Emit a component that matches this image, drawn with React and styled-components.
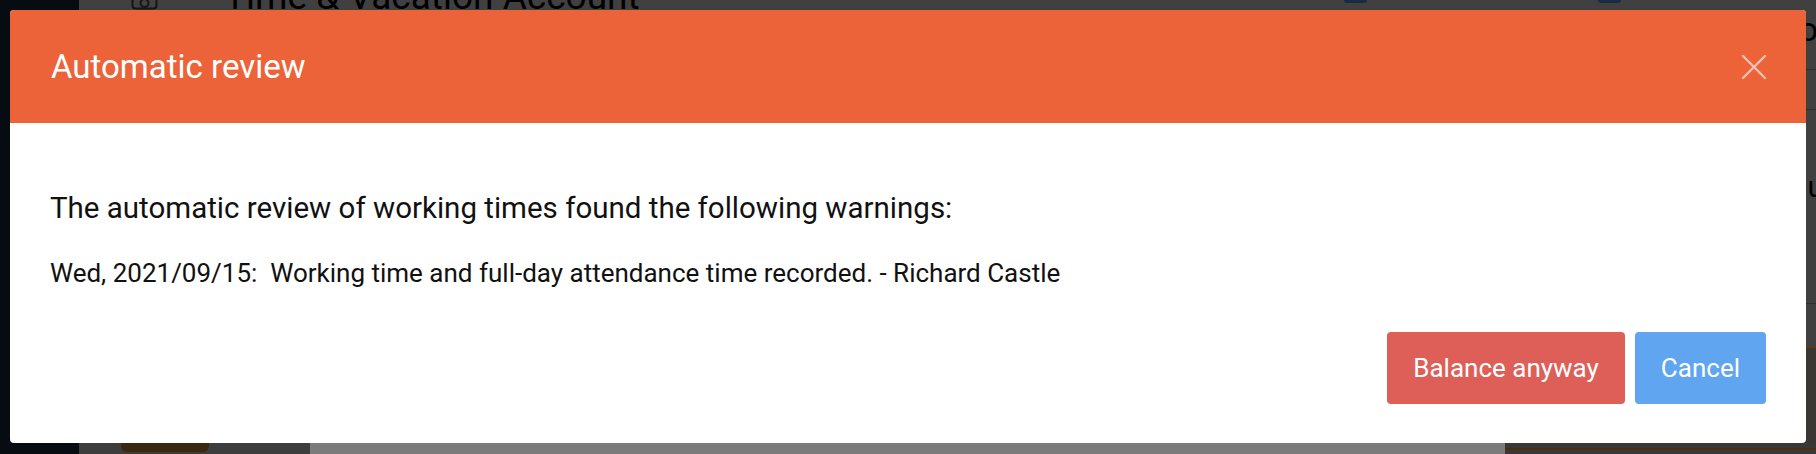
import React from 'react'
import styled, { createGlobalStyle } from 'styled-components';

const GlobalStyle = createGlobalStyle`
html, body {
    margin:0;
    padding:0;
    background:#404040;
}
body {
    font-family: Roboto, "Liberation Sans", Arial, sans-serif;
}
`

const App = () => {
    return (
        <>
            <GlobalStyle />
            <Page>
                <Sidebar />
                <Main>
                    <TopBar>
                        <PageIcon viewBox='0 0 27 27'>
                            <rect x='1.5' y='1.5' width='24' height='24' rx='3' fill='none' stroke='#151515' strokeWidth='2' />
                            <circle cx='13.5' cy='20' r='4' fill='none' stroke='#151515' strokeWidth='2' />
                        </PageIcon>
                        <PageTitle>Time &amp; Vacation Account</PageTitle>
                        <NavyBox $first />
                        <NavyBox />
                        <EdgeText>Action</EdgeText>
                    </TopBar>
                    <Row $height={40} />
                    <Row $height={194}>
                        <EdgeText $small>Menu</EdgeText>
                    </Row>
                    <Row $height={43} $line='#5a3a1c' />
                    <Filler />
                    <BottomBar>
                        <BottomLeft>
                            <Pill />
                        </BottomLeft>
                        <BottomMid />
                        <BottomRight />
                    </BottomBar>
                </Main>

                <Modal role='dialog'>
                    <ModalHeader>
                        <ModalTitle>Automatic review</ModalTitle>
                        <CloseButton aria-label='close'>
                            <svg width='26' height='26' viewBox='0 0 26 26'>
                                <path d='M2 2 L24 24 M24 2 L2 24' stroke='rgba(255,255,255,0.6)' strokeWidth='2.4' strokeLinecap='round' />
                            </svg>
                        </CloseButton>
                    </ModalHeader>
                    <ModalBody>
                        <Intro>The automatic review of working times found the following warnings:</Intro>
                        <Warning>Wed, 2021/09/15:{'\u00a0'} Working time and full-day attendance time recorded. - Richard Castle</Warning>
                        <ButtonRow>
                            <ActionButton $bg='#de5f58'>Balance anyway</ActionButton>
                            <ActionButton $bg='#60a5ef'>Cancel</ActionButton>
                        </ButtonRow>
                    </ModalBody>
                </Modal>
            </Page>
        </>
    )
}

const Page = styled.div`
position:relative;
display:flex;
width:1816px;
height:454px;
overflow:hidden;
background:#404040;
`

const Sidebar = styled.div`
width:79px;
flex-shrink:0;
background:#070b12;
`

const Main = styled.div`
flex:1;
display:flex;
flex-direction:column;
min-width:0;
`

const TopBar = styled.div`
display:flex;
align-items:flex-start;
height:99px;
margin-top:-30px;
padding-left:52px;
border-bottom:1px solid #2e2e2e;
flex-shrink:0;
`

const PageIcon = styled.svg`
width:27px;
height:27px;
margin-top:13px;
flex-shrink:0;
`

const PageTitle = styled.h1`
margin:8px 0 0 66px;
font-size:37px;
line-height:37px;
font-weight:400;
color:#000;
white-space:nowrap;
`

const NavyBox = styled.div`
width:23px;
height:23px;
margin-top:10px;
margin-left:${p => p.$first ? 'auto' : '231px'};
border-radius:3px;
background:#1a2a42;
flex-shrink:0;
`

const EdgeText = styled.span`
margin-left:${p => p.$small ? 'auto' : '118px'};
margin-right:${p => p.$small ? '-8px' : '-21px'};
margin-top:${p => p.$small ? '62px' : '42px'};
font-size:${p => p.$small ? '30px' : '34px'};
line-height:1;
color:#000;
white-space:nowrap;
flex-shrink:0;
`

const Row = styled.div`
display:flex;
align-items:flex-start;
height:${p => p.$height - 1}px;
border-bottom:${p => p.$line ? '2px' : '1px'} solid ${p => p.$line || '#2e2e2e'};
flex-shrink:0;
`

const Filler = styled.div`
flex:1;
background:#3a3733;
`

const BottomBar = styled.div`
display:flex;
height:11px;
flex-shrink:0;
`

const BottomLeft = styled.div`
width:231px;
background:#3d3d3d;
`

const Pill = styled.div`
margin-left:42px;
width:88px;
height:9px;
border-radius:0 0 6px 6px;
background:#3b2710;
`

const BottomMid = styled.div`
width:1195px;
background:#7b7b7b;
`

const BottomRight = styled.div`
flex:1;
background:#3a3835;
border-top:5px solid #3a3835;
box-shadow:inset 0 2px 0 #4a2e14;
`

const Modal = styled.div`
position:absolute;
top:10px;
left:10px;
width:1796px;
height:433px;
display:flex;
flex-direction:column;
background:#fff;
border-radius:4px;
overflow:hidden;
`

const ModalHeader = styled.div`
display:flex;
align-items:center;
justify-content:space-between;
height:113px;
padding:0 39px 0 41px;
background:#ec6339;
flex-shrink:0;
`

const ModalTitle = styled.h2`
margin:0;
font-size:33px;
font-weight:400;
color:#fff;
`

const CloseButton = styled.button`
display:flex;
padding:0;
border:none;
background:none;
cursor:pointer;
`

const ModalBody = styled.div`
flex:1;
display:flex;
flex-direction:column;
padding:67px 40px 39px 40px;
color:#111;
`

const Intro = styled.p`
margin:0;
font-size:29.5px;
line-height:36px;
`

const Warning = styled.p`
margin:31px 0 0;
font-size:26px;
line-height:32px;
white-space:pre;
`

const ButtonRow = styled.div`
display:flex;
justify-content:flex-end;
gap:10px;
margin-top:auto;
`

const ActionButton = styled.button`
height:72px;
padding:0 26px;
border:none;
border-radius:4px;
background:${p => p.$bg};
color:#fff;
font-family:inherit;
font-size:26px;
cursor:pointer;
`

export default App;
